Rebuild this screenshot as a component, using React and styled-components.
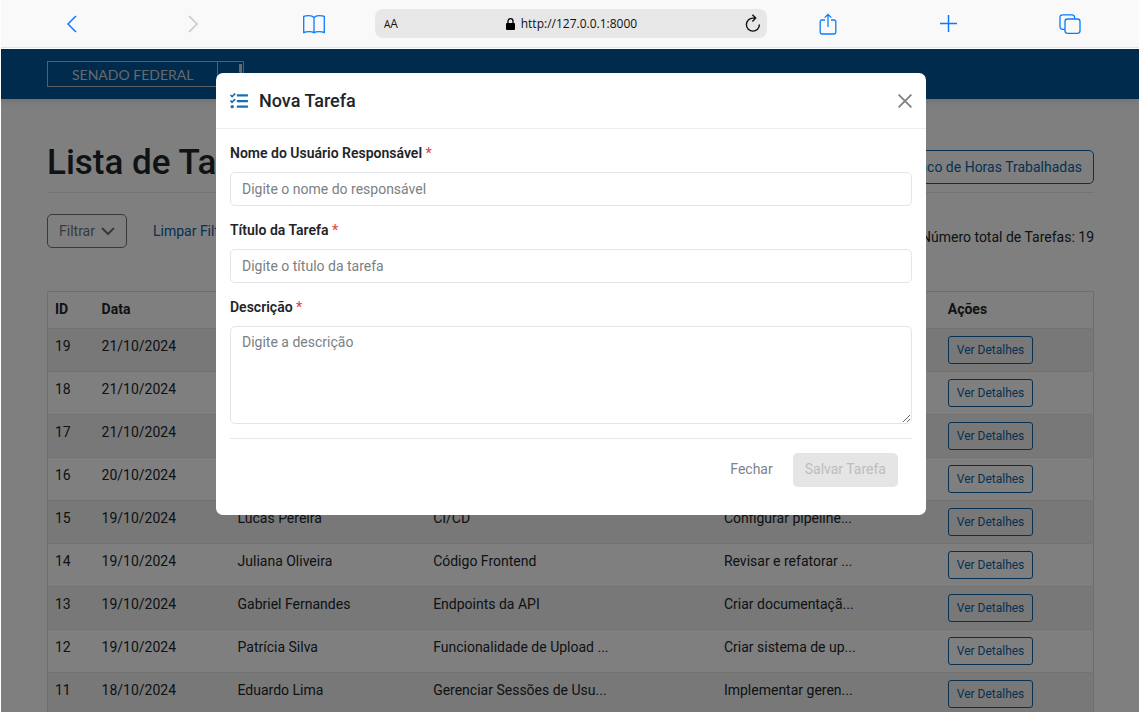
import React from "react";
import styled, { createGlobalStyle } from "styled-components";
import { FaTasks } from "react-icons/fa";

const GlobalStyle = createGlobalStyle`
  *, *::before, *::after { box-sizing: border-box; }
  body {
    margin: 0;
    background: #fff;
    color: #212529;
    font: 14px/21px Roboto, "Liberation Sans", sans-serif;
  }
  button, input, textarea { font: inherit; }
`;

const Window = styled.div`
  display: flex;
  flex-direction: column;
  height: 100vh;
  padding-left: 1px;
`;

const BrowserBar = styled.header`
  flex: none;
  display: grid;
  grid-template-columns: repeat(3, 1fr) minmax(200px, 392px) repeat(3, 1fr);
  align-items: center;
  height: 48px;
  margin-bottom: 1px;
  padding: 0 8px 0 10px;
  background: #f9f9f9;
  border-bottom: 1px solid #e4e4e4;
`;

const BarButton = styled.button`
  display: flex;
  justify-content: center;
  padding: 0;
  border: 0;
  background: none;
  color: ${(p) => (p.disabled ? "#c8c8c8" : "#0a7cff")};
`;

const AddressBar = styled.div`
  display: flex;
  align-items: center;
  justify-content: space-between;
  height: 29px;
  padding: 1px 6px 0 9px;
  border-radius: 8px;
  background: #e7e7e7;
  color: #111;
  font: 12px/16px "Open Sans", sans-serif;
`;

const Address = styled.span`
  display: flex;
  align-items: center;
  gap: 6px;
`;

const SmallA = styled.span`
  font-size: 10px;
`;

const ReloadButton = styled.button`
  display: flex;
  padding: 0;
  border: 0;
  background: none;
  color: #111;
`;

const Viewport = styled.div`
  position: relative;
  flex: 1;
  min-height: 0;
  overflow: hidden;
`;

const SiteHeader = styled.div`
  display: flex;
  align-items: center;
  height: 50px;
  padding: 0 46px;
  background: #00569a;
  box-shadow: 0 2px 8px rgba(0, 0, 0, 0.15);
`;

const Logo = styled.div`
  display: flex;
  height: 26px;
  border: 1px solid #b4bcc4;
  color: #ccd2d8;
`;

const LogoName = styled.span`
  padding: 0 24px;
  border-right: 1px solid #b4bcc4;
  font: 14px/25px Lato, sans-serif;
`;

const LogoMark = styled.span`
  display: flex;
  justify-content: flex-end;
  width: 25px;
  padding-top: 2px;
`;

const Content = styled.main`
  padding: 43px 45px 0 46px;
`;

const TitleRow = styled.div`
  display: flex;
  justify-content: space-between;
  align-items: flex-end;
  padding-bottom: 8px;
  border-bottom: 1px solid #e6e7e9;
`;

const PageTitle = styled.h1`
  margin: 0;
  font-size: 35px;
  line-height: 42px;
  font-weight: 500;
`;

const OutlineButton = styled.button`
  display: inline-flex;
  align-items: center;
  justify-content: center;
  gap: 6px;
  height: ${(p) => (p.$small ? 28 : 34)}px;
  padding: 0 ${(p) => (p.$small ? 8 : 11)}px;
  border: 1px solid ${(p) => (p.$muted ? "#6c757d" : "#0c62a6")};
  border-radius: ${(p) => (p.$small ? 3 : 5)}px;
  background: none;
  color: ${(p) => (p.$muted ? "#6c757d" : "#0c62a6")};
  font-size: ${(p) => (p.$small ? 12 : 14)}px;
  white-space: nowrap;
  vertical-align: top;
`;

const FilterRow = styled.div`
  display: flex;
  align-items: center;
  gap: 26px;
  padding: 21px 0 43px;
`;

const ClearLink = styled.a`
  color: #0c62a6;
  text-decoration: none;
`;

const Total = styled.span`
  margin: 12px 0 0 auto;
`;

const Table = styled.table`
  width: 100%;
  border: 1px solid #dadcde;
  border-collapse: collapse;
  table-layout: fixed;

  th, td {
    padding: 7px;
    border-bottom: 1px solid #e6e7e9;
    text-align: left;
    vertical-align: top;
    white-space: nowrap;
  }
  th {
    height: 37px;
    font-weight: 700;
  }
  td { height: 43px; }
  tbody tr:nth-child(odd) { background: #f0f0f0; }
`;

const Col = styled.col`
  width: ${(p) => p.$share}%;
`;

const Backdrop = styled.div`
  position: absolute;
  inset: 0;
  display: flex;
  justify-content: center;
  align-items: flex-start;
  padding: 24px 16px 24px 18px;
  background: rgba(0, 0, 0, 0.5);
`;

const Dialog = styled.section`
  width: 100%;
  max-width: 710px;
  border-radius: 7px;
  background: #fff;
`;

const DialogHeader = styled.div`
  display: flex;
  align-items: center;
  gap: 11px;
  height: 56px;
  padding: 0 14px;
  border-bottom: 1px solid #eceef0;
  color: #1a6fb4;
`;

const DialogTitle = styled.h2`
  margin: 0;
  color: #212529;
  font-size: 18px;
  line-height: 26px;
  font-weight: 500;
`;

const CloseButton = styled.button`
  display: flex;
  margin-left: auto;
  padding: 0;
  border: 0;
  background: none;
  color: #808080;
`;

const Form = styled.form`
  display: flex;
  flex-direction: column;
  gap: 14px;
  padding: 14px;
`;

const Field = styled.div`
  display: flex;
  flex-direction: column;
  gap: 8px;
`;

const Label = styled.label`
  font-weight: 600;
`;

const Required = styled.span`
  color: #e5484d;
  font-weight: 500;
`;

const Input = styled.input`
  height: 34px;
  padding: 0 11px 1px;
  border: 1px solid #e3e5e8;
  border-radius: 5px;
  background: #fff;
  color: #212529;
  &::placeholder { color: #7b7f84; }
`;

const TextArea = styled.textarea`
  display: block;
  height: 98px;
  padding: 5px 11px;
  border: 1px solid #e3e5e8;
  border-radius: 5px;
  resize: vertical;
  &::placeholder { color: #7b7f84; }
`;

const DialogFooter = styled.div`
  display: flex;
  justify-content: flex-end;
  gap: 8px;
  padding: 14px;
  border-top: 1px solid #e6e9ec;
`;

const FooterButton = styled.button`
  height: 34px;
  padding: 0 12px 2px;
  border: 0;
  border-radius: 5px;
  background: ${(p) => (p.disabled ? "#e5e5e5" : "none")};
  color: ${(p) => (p.disabled ? "#bdbdbd" : "#7c838a")};
`;

const Line = ({ w, h, stroke = 1.5, children }) => (
  <svg width={w} height={h} viewBox={`0 0 ${w} ${h}`} fill="none" stroke="currentColor" strokeWidth={stroke} aria-hidden="true">
    {children}
  </svg>
);

const tasks = [
  [19, "21/10/2024", "", "", ""],
  [18, "21/10/2024", "", "", ""],
  [17, "21/10/2024", "", "", ""],
  [16, "20/10/2024", "", "", ""],
  [15, "19/10/2024", "Lucas Pereira", "CI/CD", "Configurar pipeline..."],
  [14, "19/10/2024", "Juliana Oliveira", "Código Frontend", "Revisar e refatorar ..."],
  [13, "19/10/2024", "Gabriel Fernandes", "Endpoints da API", "Criar documentaçã..."],
  [12, "19/10/2024", "Patrícia Silva", "Funcionalidade de Upload ...", "Criar sistema de up..."],
  [11, "18/10/2024", "Eduardo Lima", "Gerenciar Sessões de Usu...", "Implementar geren..."],
];

const columns = [
  { key: "id", title: "ID", share: 4.5 },
  { key: "date", title: "Data", share: 13 },
  { key: "owner", title: "", share: 18.7 },
  { key: "title", title: "", share: 27.8 },
  { key: "description", title: "", share: 21.4 },
  { key: "actions", title: "Ações", share: 14.6 },
];

function Toolbar() {
  return (
    <BrowserBar>
      <BarButton aria-label="Voltar">
        <Line w={12} h={18}><path d="M10 1 2 9l8 8" /></Line>
      </BarButton>
      <BarButton aria-label="Avançar" disabled>
        <Line w={12} h={18}><path d="m2 1 8 8-8 8" /></Line>
      </BarButton>
      <BarButton aria-label="Favoritos">
        <Line w={24} h={20} stroke={1.3}>
          <path d="M12 3.5C10.8 2.200 9 1.700 7 1.700S3 1.800 1.700 2.400V18.600C3.200 17.900 5 17.700 7 17.700s3.900.2 5 1.100c1.100-.9 3-1.100 5-1.100s3.800.2 5.300.9V2.400C21 1.800 19 1.700 17 1.700s-3.800.500-5 1.800v15" />
        </Line>
      </BarButton>
      <AddressBar>
        <span><SmallA>A</SmallA>A</span>
        <Address>
          <svg width="9" height="12" viewBox="0 0 9 12" aria-hidden="true">
            <path d="M2 5.5V3.2a2.5 2.5 0 0 1 5 0v2.3" fill="none" stroke="#000" strokeWidth="1.3" />
            <rect y="5" width="9" height="7" rx="1" />
          </svg>
          http://127.0.0.1:8000
        </Address>
        <ReloadButton aria-label="Recarregar">
          <Line w={16} h={20} stroke={1.4}>
            <path d="M14.400 10.500A6.500 6.500 0 1 1 8 4.100h2.400M7.400.8l3.300 3.300-3.300 3.300" />
          </Line>
        </ReloadButton>
      </AddressBar>
      <BarButton aria-label="Compartilhar">
        <Line w={18} h={22} stroke={1.3}>
          <path d="M6 7H3a1.8 1.8 0 0 0-1.8 1.8v10.4A1.8 1.8 0 0 0 3 21h12a1.8 1.8 0 0 0 1.8-1.8V8.800A1.8 1.8 0 0 0 15 7h-3M9 14V1.300M5.700 4.600 9 1.300l3.300 3.300" />
        </Line>
      </BarButton>
      <BarButton aria-label="Nova aba">
        <Line w={17} h={17}><path d="M8.500 0v17M0 8.500h17" /></Line>
      </BarButton>
      <BarButton aria-label="Abas">
        <Line w={22} h={20} stroke={1.3}>
          <rect x="6" y="5" width="15" height="14.300" rx="2.500" />
          <path d="M6 15.300H3.500A2.500 2.500 0 0 1 1 12.800V3.300A2.500 2.500 0 0 1 3.500.8h9.500A2.500 2.500 0 0 1 15.500 3.300V5" />
        </Line>
      </BarButton>
    </BrowserBar>
  );
}

function TaskTable() {
  return (
    <Table>
      <colgroup>
        {columns.map((column) => <Col key={column.key} $share={column.share} />)}
      </colgroup>
      <thead>
        <tr>{columns.map((column) => <th key={column.key} scope="col">{column.title}</th>)}</tr>
      </thead>
      <tbody>
        {tasks.map((task) => (
          <tr key={task[0]}>
            {task.map((value, i) => <td key={columns[i].key}>{value}</td>)}
            <td><OutlineButton $small>Ver Detalhes</OutlineButton></td>
          </tr>
        ))}
      </tbody>
    </Table>
  );
}

function NewTaskDialog() {
  return (
    <Backdrop>
      <Dialog role="dialog" aria-modal="true" aria-labelledby="dialog-title">
        <DialogHeader>
          <FaTasks size={18} aria-hidden="true" />
          <DialogTitle id="dialog-title">Nova Tarefa</DialogTitle>
          <CloseButton aria-label="Fechar janela">
            <Line w={14} h={14} stroke={1.8}><path d="m.6.6 12.800 12.800M13.400.6.6 13.400" /></Line>
          </CloseButton>
        </DialogHeader>
        <Form>
          <Field>
            <Label htmlFor="responsavel">Nome do Usuário Responsável <Required>*</Required></Label>
            <Input id="responsavel" placeholder="Digite o nome do responsável" />
          </Field>
          <Field>
            <Label htmlFor="titulo">Título da Tarefa <Required>*</Required></Label>
            <Input id="titulo" placeholder="Digite o título da tarefa" />
          </Field>
          <Field>
            <Label htmlFor="descricao">Descrição <Required>*</Required></Label>
            <TextArea id="descricao" placeholder="Digite a descrição" />
          </Field>
          <DialogFooter>
            <FooterButton type="button">Fechar</FooterButton>
            <FooterButton type="submit" disabled>Salvar Tarefa</FooterButton>
          </DialogFooter>
        </Form>
      </Dialog>
    </Backdrop>
  );
}

export default function App() {
  return (
    <Window>
      <GlobalStyle />
      <Toolbar />
      <Viewport>
        <SiteHeader>
          <Logo>
            <LogoName>SENADO FEDERAL</LogoName>
            <LogoMark>
              <svg width="4" height="22" viewBox="0 0 4 22" aria-hidden="true">
                <path d="M0 0h3v22H2V10L0 8z" fill="currentColor" />
              </svg>
            </LogoMark>
          </Logo>
        </SiteHeader>
        <Content>
          <TitleRow>
            <PageTitle>Lista de Tarefas</PageTitle>
            <OutlineButton>Banco de Horas Trabalhadas</OutlineButton>
          </TitleRow>
          <FilterRow>
            <OutlineButton $muted>
              Filtrar
              <Line w={14} h={10} stroke={2}><path d="m1 2 6 6 6-6" /></Line>
            </OutlineButton>
            <ClearLink href="#">Limpar Filtros</ClearLink>
            <Total>Número total de Tarefas: 19</Total>
          </FilterRow>
          <TaskTable />
        </Content>
        <NewTaskDialog />
      </Viewport>
    </Window>
  );
}
